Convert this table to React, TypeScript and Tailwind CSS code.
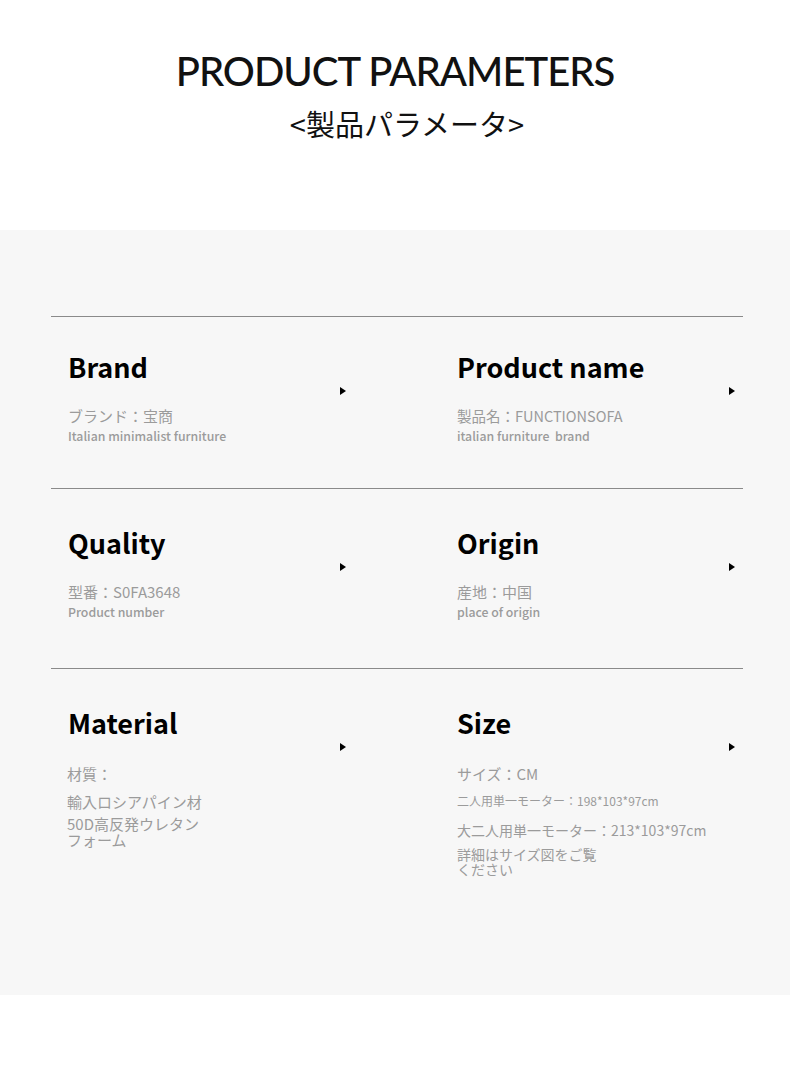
import React from "react";

const CJK = { fontFamily: '"Noto Sans CJK JP", "Noto Sans", sans-serif' };

function Arrow() {
  return (
    <div className="mt-[34px] h-0 w-0 border-y-[4px] border-l-[6px] border-y-transparent border-l-black" />
  );
}

function Cell({ title, children, last }: { title: string; children: React.ReactNode; last?: boolean }) {
  return (
    <div className={last ? "min-w-0 flex-1" : "w-[389px] shrink-0"}>
      <div className="flex h-[42px]">
        <div className="w-[272px] shrink-0 text-[27px] font-bold leading-[28px] text-black">{title}</div>
        <Arrow />
      </div>
      <div className="text-[#9b9b9b]">{children}</div>
    </div>
  );
}

export default function App() {
  return (
    <div className="w-[790px] bg-white" style={CJK}>
      <div className="h-[230px] pt-[51px]">
        <div
          className="text-center text-[40px] font-medium leading-[40px] tracking-[-1px] text-[#111]"
          style={{ fontFamily: 'Lato, "Liberation Sans", sans-serif' }}
        >
          PRODUCT PARAMETERS
        </div>
        <div className="mt-[18px] pl-[24px] text-center text-[29px] font-normal leading-[29px] text-[#111]">
          &lt;製品パラメータ&gt;
        </div>
      </div>

      <div className="h-[765px] bg-[#f7f7f7] pt-[86px]">
        <div className="ml-[51px] w-[692px]">
          <div className="h-[172px] border-t border-[#8a8a8a] pl-[17px] pt-[36px]">
            <div className="flex">
              <Cell title="Brand">
                <div className="mt-[10px] text-[15px] leading-[21px]">ブランド：宝商</div>
                <div className="text-[12.3px] font-medium leading-[21px]">Italian minimalist furniture</div>
              </Cell>
              <Cell title="Product name" last>
                <div className="mt-[10px] text-[14.5px] leading-[21px]">製品名：FUNCTIONSOFA</div>
                <div className="whitespace-pre text-[12.3px] font-medium leading-[21px]">italian furniture  brand</div>
              </Cell>
            </div>
          </div>

          <div className="h-[180px] border-t border-[#8a8a8a] pl-[17px] pt-[40px]">
            <div className="flex">
              <Cell title="Quality">
                <div className="mt-[10px] text-[15px] leading-[21px]">型番：S0FA3648</div>
                <div className="text-[12.3px] font-medium leading-[21px]">Product number</div>
              </Cell>
              <Cell title="Origin" last>
                <div className="mt-[10px] text-[15px] leading-[21px]">産地：中国</div>
                <div className="text-[12.3px] font-medium leading-[21px]">place of origin</div>
              </Cell>
            </div>
          </div>

          <div className="border-t border-[#8a8a8a] pl-[17px] pt-[40px]">
            <div className="flex">
              <Cell title="Material">
                <div className="-ml-[1px]">
                  <div className="mt-[12px] text-[15px] leading-[21px]">材質：</div>
                  <div className="mt-[10px] text-[15px] leading-[16px]">輸入ロシアパイン材</div>
                  <div className="mt-[6px] w-[145px] text-[15px] leading-[16px]">50D高反発ウレタンフォーム</div>
                </div>
              </Cell>
              <Cell title="Size" last>
                <div className="mt-[12px] text-[15px] leading-[21px]">サイズ：CM</div>
                <div className="mt-[9px] text-[12px] leading-[16px]">二人用単一モーター：198*103*97cm</div>
                <div className="mt-[13px] text-[14px] leading-[16px]">大二人用単一モーター：213*103*97cm</div>
                <div className="mt-[9px] w-[145px] text-[14px] leading-[15px]">詳細はサイズ図をご覧ください</div>
              </Cell>
            </div>
          </div>
        </div>
      </div>
      <div className="h-[79px] bg-white" />
    </div>
  );
}
